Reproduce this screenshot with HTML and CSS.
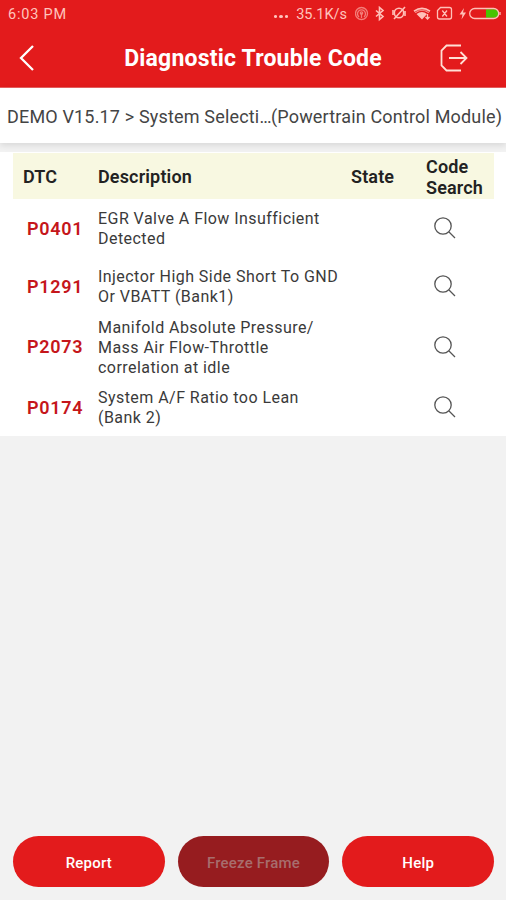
FILE: index.html
```html
<!DOCTYPE html>
<html lang="en">
	<head>
		<meta charset="utf-8">
		<meta name="viewport" content="width=device-width">
		<title>Diagnostic Trouble Code</title>
		<link rel="stylesheet" href="styles.css">
	</head>

	<body>
		<svg class="sprite" width="0" height="0">
			<symbol id="search" viewBox="0 0 22 22">
				<circle cx="9" cy="9" r="8.2"/>
				<path d="M15 15l6 6"/>
			</symbol>
		</svg>

		<header>
			<div class="status">
				<span class="time">6:03 PM</span>
				<span class="dots"><i></i><i></i><i></i></span>
				<span class="speed">35.1K/s</span>
				<svg class="status-icons" width="146" height="16" viewBox="355 6 146 16">
					<g class="faint">
						<circle cx="361.5" cy="13.5" r="6"/>
						<path d="M359 17a4 4 0 1 1 5 0M361.500 13v5"/>
						<circle cx="361.500" cy="13" r="1.200"/>
					</g>
					<path class="bold" d="M376 10.500l7 6-3.500 3v-12l3.500 3-7 6"/>
					<g class="bold">
						<circle cx="399" cy="13" r="4.700"/>
						<path d="M394 19l11-12M393 10v5M405 11v5"/>
					</g>
					<path class="solid" d="M413.500 10.500q8.500-6 17 0l-2 2.500q-6.500-4.500-13 0zM416.500 14q5.500-4 10.500 0l-5 5.500z"/>
					<path class="cut" d="M415 12q7-4.500 14 0"/>
					<path d="M427.500 14v5M425.500 17l2 2 2-2"/>
					<path d="M440.500 7.500h9q2 0 2 2v7.500q0 2-2 2h-10q-2 0-2-2v-6.500zM442.300 10.500l4.700 6M447 10.500l-4.700 6"/>
					<path class="solid" d="M464 8l-4.500 6.500h3l-1 5 4.500-7h-3z"/>
					<path class="level" d="M486 9.200h9q4 0 4 4.300t-4 4.300h-9z"/>
					<rect x="469.700" y="8.500" width="29" height="10" rx="5"/>
					<path d="M500 12v3"/>
				</svg>
			</div>
			<nav>
				<svg class="back" width="16" height="28" viewBox="0 0 16 28">
					<path d="M14 2L2 14l12 12"/>
				</svg>
				<h1>Diagnostic Trouble Code</h1>
				<svg class="exit" width="30" height="28" viewBox="0 0 30 28">
					<path d="M21 1.500H6.500l-5 5v15l5 5H21M9 14h17.500M20.500 8l6 6-6 6"/>
				</svg>
			</nav>
		</header>

		<div class="breadcrumb">DEMO V15.17 &gt; System Selecti<span class="more">...</span>(Powertrain Control Module)</div>

		<main>
			<div class="row head">
				<b>DTC</b>
				<b>Description</b>
				<b>State</b>
				<b>Code<br>Search</b>
			</div>
			<div class="row">
				<span class="code">P0401</span>
				<p>EGR Valve A Flow Insufficient<br>Detected</p>
				<span></span>
				<svg class="search"><use href="#search"/></svg>
			</div>
			<div class="row">
				<span class="code">P1291</span>
				<p>Injector High Side Short To GND<br>Or VBATT (Bank1)</p>
				<span></span>
				<svg class="search"><use href="#search"/></svg>
			</div>
			<div class="row tall">
				<span class="code">P2073</span>
				<p>Manifold Absolute Pressure/<br>Mass Air Flow-Throttle<br>correlation at idle</p>
				<span></span>
				<svg class="search"><use href="#search"/></svg>
			</div>
			<div class="row">
				<span class="code">P0174</span>
				<p>System A/F Ratio too Lean<br>(Bank 2)</p>
				<span></span>
				<svg class="search"><use href="#search"/></svg>
			</div>
		</main>

		<footer>
			<button>Report</button>
			<button disabled>Freeze Frame</button>
			<button>Help</button>
		</footer>
	</body>
</html>
```

FILE: styles.css
```css
* {
	box-sizing: border-box;
}
body {
	display: flex;
	flex-direction: column;
	height: 100vh;
	margin: 0;
	background: #f2f2f2;
	color: #222;
	font-family: Roboto, "Liberation Sans", sans-serif;
}
svg {
	display: block;
	fill: none;
}
.sprite {
	position: absolute;
}
header {
	height: 88px;
	background: #e31b1c;
	border-bottom: 1px solid #ea6060;
	color: #fff;
}
.status {
	display: flex;
	align-items: center;
	height: 28px;
	padding: 0 5px 0 8px;
	color: #ffc4bd;
	font-size: 14.5px;
}
.time {
	letter-spacing: 0.8px;
}
.dots {
	display: flex;
	gap: 2px;
	margin: 5px 8px 0 auto;
}
.dots i {
	width: 3.5px;
	height: 3px;
	border-radius: 50%;
	background: #ffc4bd;
}
.speed {
	margin-right: 8px;
	letter-spacing: 0;
}
.status-icons {
	stroke: #ffc0b8;
	stroke-width: 1.3;
}
.status-icons .bold {
	stroke-width: 1.6;
}
.status-icons .faint {
	opacity: 0.6;
}
.status-icons .solid {
	fill: #ffc0b8;
	stroke: none;
}
.status-icons .cut {
	stroke: #e31b1c;
	stroke-width: 0.8;
}
.status-icons .level {
	fill: #48c400;
	stroke: none;
}
nav {
	display: flex;
	align-items: center;
	justify-content: space-between;
	height: 59px;
	padding: 0 36px 0 19px;
}
nav svg {
	stroke: #fff;
}
.back {
	stroke-width: 2.3;
}
.exit {
	stroke: #ffe0d5;
	stroke-width: 1.8;
}
h1 {
	margin: 2px 0 0 31px;
	font-size: 23px;
	font-weight: 700;
	letter-spacing: 0.2px;
	white-space: nowrap;
}
.breadcrumb {
	height: 55px;
	padding-left: 7px;
	background: #fff;
	color: #444;
	box-shadow: 0 2px 7px rgba(0, 0, 0, 0.12);
	font-size: 18px;
	letter-spacing: 0.17px;
	line-height: 57px;
	white-space: nowrap;
}
.more {
	letter-spacing: -0.9px;
}
main {
	margin-top: 9px;
	padding: 1px 12px 0 13px;
	background: #fff;
}
.row {
	display: grid;
	grid-template-columns: 85px 253px 75px 1fr;
	align-items: center;
	height: 58px;
}
.row.tall {
	height: 63px;
}
.head {
	height: 46px;
	background: #f8f8e1;
	font-size: 18px;
	letter-spacing: 0.15px;
	line-height: 21px;
}
.head b {
	padding-top: 1px;
	font-weight: 600;
}
.head b:first-child {
	padding-left: 10px;
}
.code {
	padding-left: 14px;
	color: #c5161b;
	font-size: 18px;
	font-weight: 600;
	letter-spacing: 0.7px;
}
p {
	margin: 2px 0 0;
	color: #3a3a3a;
	font-size: 16px;
	letter-spacing: 0.45px;
	line-height: 20px;
	white-space: nowrap;
}
.search {
	width: 22px;
	height: 22px;
	margin-left: 8px;
	stroke: #555;
	stroke-width: 1.3;
}
footer {
	display: flex;
	gap: 13px;
	margin-top: auto;
	padding: 0 12px 13px 13px;
}
button {
	flex: 1;
	height: 51px;
	padding: 2px 0 0;
	border: 0;
	border-radius: 26px;
	background: #e31b1c;
	color: #fff;
	font: 500 15px Roboto, sans-serif;
	letter-spacing: 0.2px;
}
button:disabled {
	background: #961c1f;
	color: #a76d6d;
}
```
